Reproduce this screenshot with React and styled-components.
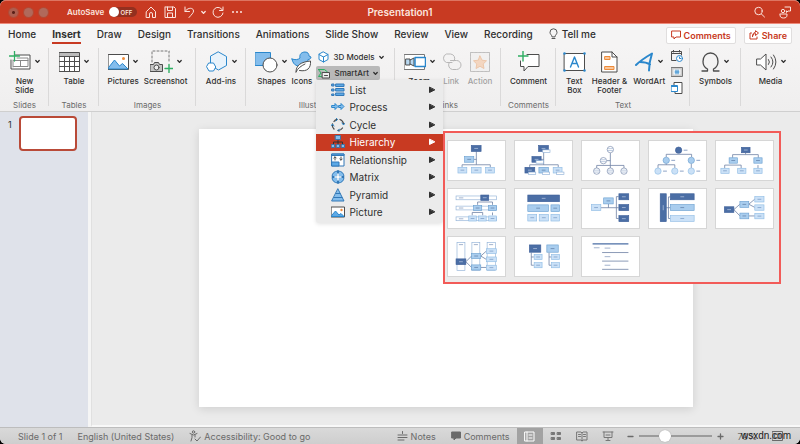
import React from "react";
import styled, { createGlobalStyle, css } from "styled-components";

const c = {
  red: "#c83a22",
  line: "#4d4d4d",
  blue: "#2a87cc",
  sky: "#84bdec",
  green: "#2fae63",
  navy: "#4b6ea5",
  mid: "#a9cdee",
  pale: "#cbe1f7",
};

const Global = createGlobalStyle`
  * { box-sizing: border-box; }
  body { margin: 0; background: #000; font-family: Inter, "Liberation Sans", sans-serif; color: #2f2f2f; }
  button { font: inherit; color: inherit; background: none; border: 0; margin: 0; padding: 0; white-space: nowrap; }
`;

const Window = styled.div`
  min-height: 100vh;
  display: flex;
  flex-direction: column;
  border-radius: 6px;
  background: #ebebeb;
`;

/* Title bar */
const TitleBar = styled.header`
  display: grid;
  grid-template-columns: 1fr auto 1fr;
  align-items: center;
  height: 24px;
  padding: 0 9px;
  color: #fbe4de;
  background: ${c.red};
  border-top: 1px solid #dd7562;
  border-bottom: 1px solid #ee8a7a;
  border-radius: 6px 6px 0 0;
`;
const BarSide = styled.div`
  display: flex;
  align-items: center;
  justify-content: ${(p) => (p.$end ? "flex-end" : "flex-start")};
  gap: ${(p) => p.$gap}px;
`;
const Title = styled.h1`
  margin: 0;
  font-size: 10px;
  font-weight: 600;
`;
const Light = styled.button`
  width: 9px;
  height: 9px;
  border-radius: 50%;
  background: ${(p) => (p.$active ? "radial-gradient(circle, #5c2018 0 1px, #ad5f50 2px)" : "#b0695b")};
  box-shadow: 0 0 0 1px #b34a35;
`;
const AutoSave = styled.label`
  display: flex;
  align-items: center;
  gap: 5px;
  margin: 0 2px 0 13px;
  font-size: 8px;
  font-weight: 600;
`;
const Switch = styled.span`
  position: relative;
  display: flex;
  align-items: center;
  justify-content: flex-end;
  width: 28px;
  height: 10px;
  padding-right: 5px;
  border-radius: 5px;
  background: #93301f;
  font-size: 6px;
  &::before {
    content: "";
    position: absolute;
    left: 0;
    width: 10px;
    height: 10px;
    border-radius: 50%;
    background: #fff;
  }
`;
const SwitchInput = styled.input`
  position: absolute;
  inset: 0;
  margin: 0;
  opacity: 0;
`;
const IconButton = styled.button`
  display: flex;
`;

const Svg = styled.svg`
  display: block;
  flex: none;
  fill: none;
  stroke: currentColor;
  stroke-width: 1;
  stroke-linecap: round;
  stroke-linejoin: round;
`;
const Icon = ({ w, h, children }) => (
  <Svg width={w} height={h} viewBox={`0 0 ${w} ${h}`} aria-hidden="true">{children}</Svg>
);
const Chevron = () => (
  <Icon w={5} h={5}><path d="M.8 1.5 2.5 3.4 4.2 1.5" strokeWidth="1.3" /></Icon>
);

/* Tabs */
const TabRow = styled.div`
  display: flex;
  align-items: center;
  height: 22px;
  padding: 0 8px;
  background: #f5f4f4;
`;
const Tabs = styled.nav`
  display: flex;
  gap: 16px;
  flex: 1;
`;
const Tab = styled.button`
  display: flex;
  align-items: center;
  gap: 4px;
  height: 18px;
  font-size: 10px;
  font-weight: ${(p) => (p.$active ? 700 : 500)};
  border-bottom: 2px solid ${(p) => (p.$active ? c.red : "transparent")};
`;
const Actions = styled.div`
  display: flex;
  gap: 8px;
`;
const ActionButton = styled.button`
  display: flex;
  align-items: center;
  gap: 3px;
  height: 17px;
  padding: 0 4px;
  font-size: 9px;
  font-weight: 600;
  color: ${c.red};
  background: #fff;
  border: 1px solid #e0dede;
  border-radius: 2px;
`;

/* Ribbon */
const Ribbon = styled.div`
  display: flex;
  height: 66px;
  padding-top: 2px;
  background: linear-gradient(#f5f4f4, #efeeee);
  border-bottom: 1px solid #cfcfcf;
`;
const Group = styled.section`
  position: relative;
  flex: ${(p) => p.$share} 1 0;
  min-width: 0;
  display: flex;
  flex-direction: column;
  align-items: center;
  justify-content: space-between;
  padding-bottom: 1px;
  &:not(:last-child)::after {
    content: "";
    position: absolute;
    right: 0;
    top: 0;
    height: 58px;
    border-right: 1px solid #dad9d9;
  }
`;
const Items = styled.div`
  display: flex;
  justify-content: center;
  gap: ${(p) => p.$gap || 6}px;
`;
const Tool = styled.button`
  display: flex;
  flex-direction: column;
  align-items: center;
  gap: 4px;
  padding-top: 2px;
  font-size: 8px;
  font-weight: 500;
  line-height: 9px;
  opacity: ${(p) => (p.disabled ? 0.42 : 1)};
  white-space: pre;
`;
const ToolIcon = styled.span`
  display: flex;
  align-items: center;
  gap: 4px;
  height: 23px;
`;
const GroupLabel = styled.div`
  font-size: 8px;
  line-height: 10px;
  color: #6b6b6b;
`;
const Stack = styled.div`
  display: flex;
  flex-direction: column;
  gap: ${(p) => p.$gap || 0}px;
  padding-top: 2px;
`;
const SmallTool = styled.button`
  display: flex;
  align-items: center;
  gap: 4px;
  height: 14px;
  padding: 0 2px;
  font-size: 8px;
  font-weight: 500;
  border-radius: 2px;
  background: ${(p) => (p.$open ? "#b9b9b9" : "transparent")};
`;
const MenuAnchor = styled.div`
  position: relative;
`;

/* Menus */
const Menu = styled.div`
  position: absolute;
  z-index: 5;
  top: 100%;
  left: 0;
  width: 127px;
  height: 143px;
  padding: 1px 0 2px;
  display: grid;
  grid-auto-rows: 1fr;
  background: #ebebeb;
  border-radius: 0 0 3px 3px;
  box-shadow: 0 1px 4px rgba(0, 0, 0, 0.12);
`;
const MenuItem = styled.button`
  display: grid;
  grid-template-columns: 14px 1fr 8px;
  align-items: center;
  gap: 4px;
  width: 100%;
  height: 100%;
  padding: 0 7px 0 15px;
  font-size: 10px;
  text-align: left;
  color: #303030;
  ${(p) => p.$active && css`color: #fff; background: ${c.red};`}
`;
const MenuCell = styled.div`
  position: relative;
`;
const Gallery = styled.div`
  position: absolute;
  left: 100%;
  top: -3px;
  display: grid;
  grid-template-columns: repeat(5, 59px);
  grid-auto-rows: 41px;
  gap: 7px 8px;
  width: 338px;
  padding: 7px 2px 5px;
  border: 2px solid #f25b58;
  background: #ebebeb;
`;
const Layout = styled.button`
  display: block;
  background: #fff;
  border: 1px solid #d6d6d6;
`;
const LayoutArt = styled.svg`
  display: block;
  width: 100%;
  height: 100%;
`;

/* Work area */
const Workspace = styled.div`
  flex: 1;
  display: flex;
`;
const Slides = styled.aside`
  flex: none;
  display: flex;
  align-items: flex-start;
  gap: 7px;
  width: 91px;
  padding: 4px 0 0 8px;
  font-size: 9px;
  line-height: 17px;
  background: #dfe2ea;
  border-right: 3px solid #f5f5f5;
`;
const Thumb = styled.button`
  width: 58px;
  height: 35px;
  background: #fff;
  border: 2px solid #b94a38;
  border-radius: 4px;
`;
const Canvas = styled.main`
  flex: 1;
  padding: 17px 107px 18px;
  border-bottom: 2px solid #f8f8f8;
  border-left: 1px solid #e0e0e0;
`;
const Slide = styled.div`
  aspect-ratio: 16 / 9;
  background: #fff;
  box-shadow: 0 2px 9px rgba(0, 0, 0, 0.12);
`;

/* Status bar */
const Status = styled.footer`
  position: relative;
  display: flex;
  align-items: center;
  justify-content: space-between;
  height: 17px;
  padding: 0 17px 0 18px;
  font-size: 9px;
  color: #6a6a6a;
  background: linear-gradient(#d9d9d9, #cecece);
  border-top: 1px solid #bdbdbd;
  border-radius: 0 0 6px 6px;
`;
const StatusSide = styled.div`
  display: flex;
  align-items: center;
  gap: ${(p) => p.$gap}px;
`;
const StatusButton = styled.button`
  display: flex;
  align-items: center;
  gap: 3px;
`;
const Views = styled.div`
  display: flex;
  margin-left: 7px;
`;
const ViewButton = styled.button`
  display: flex;
  align-items: center;
  justify-content: center;
  width: 26px;
  height: 16px;
  color: ${(p) => (p.$active ? "#fff" : "#777")};
  background: ${(p) => (p.$active ? "#a2a2a2" : "none")};
`;
const Zoom = styled.div`
  display: flex;
  align-items: center;
  gap: 5px;
  margin: 0 14px 0 6px;
`;
const Slider = styled.input`
  appearance: none;
  width: 73px;
  height: 12px;
  margin: 0;
  background: linear-gradient(#9b9b9b, #9b9b9b) center / 100% 2px no-repeat;
  &::-webkit-slider-thumb {
    appearance: none;
    width: 12px;
    height: 12px;
    border-radius: 50%;
    background: #fff;
    box-shadow: 0 0 1px #888;
  }
`;
const Fit = styled.button`
  display: flex;
  margin-left: 15px;
`;
const Watermark = styled.span`
  position: absolute;
  right: 9px;
  top: 2px;
  font: 10px/12px "Liberation Sans", sans-serif;
  color: #1c1c1c;
`;

/* Ribbon icons */
const NewSlideIcon = () => (
  <Icon w={22} h={22}>
    <path d="M6 4h15v14H2V9" stroke={c.line} fill="#fff" />
    <path d="M4 16V9M8 7h11v8.500H4.500M4.500 9.500H19M11.500 9.500v6" stroke="#888" />
    <path d="M5.500 0v10M.500 5h10" stroke={c.green} strokeWidth="1.3" />
  </Icon>
);
const TableIcon = () => (
  <Icon w={21} h={22}>
    <rect x=".5" y="1.5" width="20" height="19" fill="#fff" stroke={c.line} />
    <rect x="1" y="2" width="19" height="3" fill="#bbb" stroke="none" />
    <path d="M.500 5.500h20M.500 10.500h20M.500 15.500h20M5.500 5.500v15M10.500 5.500v15M15.500 5.500v15" stroke={c.line} />
  </Icon>
);
const PicturesIcon = () => (
  <Icon w={21} h={22}>
    <rect x=".5" y="3.500" width="20" height="15" fill="#fff" stroke={c.line} />
    <path d="M1 16 6.500 9l5 6 3-2.500L20 18H1z" fill={c.sky} stroke={c.blue} />
    <circle cx="15.500" cy="7.500" r="1.500" fill="#ee8b3a" stroke="none" />
  </Icon>
);
const ScreenshotIcon = () => (
  <Icon w={23} h={23}>
    <path d="M2 12V1h17v12" stroke="#777" strokeDasharray="2 2" fill="none" />
    <path d="M.500 14.500h3l1-2h4l1 2h3v7H.500z" fill="#c4c4c4" stroke={c.line} />
    <circle cx="6.500" cy="17.500" r="2.500" fill="#eee" stroke={c.line} />
    <path d="M19 14.500v8M15 18.500h8" stroke={c.green} strokeWidth="1.4" />
  </Icon>
);
const AddinsIcon = () => (
  <Icon w={22} h={22}>
    <path d="m12.500 1 8 4.500v9l-8 4.500-8-4.500v-9z" fill="#e9f3fb" stroke={c.blue} />
    <path d="M3 12h4.500l2.300 4-2.300 4H3L.700 16z" fill="#fff" stroke={c.blue} />
  </Icon>
);
const ShapesIcon = () => (
  <Icon w={23} h={22}>
    <rect x=".5" y="1.5" width="15" height="13" fill={c.sky} stroke={c.blue} />
    <circle cx="15" cy="14" r="7" fill="#fff" stroke={c.line} />
  </Icon>
);
const IconsIcon = () => (
  <Icon w={21} h={22}>
    <path d="M1 8c3 1 6 1 8-1-1-4 2-6 5-6s4 2 4 4l2 1c0 2-2 2.500-3 2.500 0 2-1 4-3 6-5 2-12 1-13-6.500z" fill={c.sky} stroke={c.blue} />
    <path d="M5 21c0-7 5-10 14.500-11 .5 7-3 11-11 9.500M5 21c2-4 5-6 9-8" fill="#fff" stroke={c.line} />
  </Icon>
);
const CubeIcon = () => (
  <Icon w={11} h={12}>
    <path d="m5.500 1 4.500 2.500v5L5.500 11 1 8.500v-5z" fill="#fff" stroke={c.blue} />
    <path d="m1 3.500 4.500 2.500L10 3.500M5.500 6v5" stroke={c.blue} />
  </Icon>
);
const SmartArtIcon = () => (
  <Icon w={12} h={11}>
    <path d="M.500 1.500h6l3 2.500M.500 1.500 3 5 .500 8.500h3" stroke={c.green} fill="#9ed3b1" />
    <rect x="4.500" y="4.500" width="7" height="5.500" fill="#eee" stroke={c.line} />
    <path d="M6.500 7.500h3" stroke={c.line} />
  </Icon>
);
const ZoomIcon = () => (
  <Icon w={22} h={22}>
    <rect x=".5" y="3.500" width="20" height="15" fill="#fff" stroke="#777" />
    <path d="M2 8h4v6H2zM6 9l4-2v8l-4-2" fill="#b8d8f0" stroke={c.line} />
    <rect x="11" y="6.500" width="10.500" height="9" fill="#fff" stroke={c.blue} strokeWidth="1.500" />
  </Icon>
);
const LinkIcon = () => (
  <Icon w={21} h={22}>
    <path d="M11 11.500H5.500a4.500 4.500 0 0 1 0-8.500h4a4.500 4.500 0 0 1 3.500 7M9.500 9.500h6a4.500 4.500 0 0 1 0 9h-4A4.500 4.500 0 0 1 8 12" stroke="#666" />
  </Icon>
);
const ActionIcon = () => (
  <Icon w={20} h={22}>
    <rect x=".5" y="1.500" width="19" height="19" fill="#eee" stroke="#777" strokeDasharray="3 1" />
    <path d="m10 5 2 4.200 4.500.600-3.300 3.200.800 4.500-4-2.200-4 2.200.800-4.500-3.300-3.200L8 9.200z" fill="#f4b07c" stroke="#e58b45" />
  </Icon>
);
const CommentIcon = () => (
  <Icon w={22} h={22}>
    <path d="M9 3.500h12v12H10l-4 4.500v-4.500H2.500V10" fill="#fff" stroke={c.line} />
    <path d="M5 0v10M0 5h10" stroke={c.green} strokeWidth="1.400" />
  </Icon>
);
const TextBoxIcon = () => (
  <Icon w={23} h={22}>
    <rect x="1.500" y="2.500" width="20" height="17" fill="#fff" stroke={c.line} />
    <path d="m7.500 16 4-10 4 10M9 12.500h5" stroke={c.blue} strokeWidth="1.400" />
    <path d="M1.500 2.500h.010M21.500 2.500h.010M1.500 19.500h.010M21.500 19.500h.010" stroke={c.blue} strokeWidth="2.600" />
  </Icon>
);
const HeaderIcon = () => (
  <Icon w={17} h={22}>
    <path d="M1 1h10l5 5v15H1z" fill="#fff" stroke={c.line} />
    <path d="M11 1v5h5" stroke={c.line} />
    <path d="M4 5.500h5v3H4zM4 15.500h9v3H4z" fill="#f8c79c" stroke="#ee8b3a" />
  </Icon>
);
const WordArtIcon = () => (
  <Icon w={19} h={22}>
    <path d="M1 14C5 10 11 6 17 2.500c-2 6-3 12-3 17M5 11c4 0 7 .500 10 2.500" stroke={c.blue} strokeWidth="2" />
  </Icon>
);
const DateIcon = () => (
  <Icon w={12} h={12}>
    <path d="M5 10.500H.500v-9h10V5M.500 3.500h10M2.500 0v2M8.500 0v2" stroke={c.line} />
    <circle cx="8.500" cy="8.500" r="3" fill="#fff" stroke={c.blue} />
    <path d="M8.500 7v1.500H10" stroke={c.blue} />
  </Icon>
);
const NumberIcon = () => (
  <Icon w={12} h={12}>
    <rect x=".5" y="1.500" width="11" height="9" fill="#ccc" stroke="#777" />
    <rect x="2.500" y="3.500" width="7" height="5" fill="#fff" stroke="none" />
    <path d="M5 4v4M7 4v4M4 5.200h4M4 6.800h4" stroke={c.blue} strokeWidth=".8" />
  </Icon>
);
const ObjectIcon = () => (
  <Icon w={12} h={12}>
    <path d="M3 3V.500h8v11H4V9" fill="#fff" stroke={c.line} />
    <path d="M.500 3.500h6v6h-6zM.500 4.500h6" fill="#fff" stroke={c.blue} />
  </Icon>
);
const OmegaIcon = () => (
  <Icon w={19} h={22}>
    <path d="M1 20h5.500v-2C3.500 16.500 2 14 2 10.500 2 5.500 5 2 9.500 2S17 5.500 17 10.500c0 3.500-1.500 6-4.500 7.500v2H18" stroke={c.line} strokeWidth="1.300" />
  </Icon>
);
const MediaIcon = () => (
  <Icon w={21} h={22}>
    <path d="M1 8h3.500L10 3v16l-5.500-5H1z" fill="#fff" stroke={c.line} />
    <path d="M12.500 8.500q2 2.500 0 5M15 6q4 5 0 10M17.500 4q5 7 0 14" stroke={c.line} />
  </Icon>
);

/* SmartArt category icons */
const categoryArt = {
  List: <><path d="M1 1h2v2H1zM1 6h2v2H1zM1 11h2v1.500H1zM5 1h8v2.500H5zM5 5.500h8V8H5zM5 10h8v2.500H5z" fill="#5da9e6" stroke="#3279b8" /></>,
  Process: <path d="M1 5.500h3v-2L7 6.500l-3 3v-2H1zM8 5.500h2v-2l3 3-3 3v-2H8z" fill={c.sky} stroke={c.blue} />,
  Cycle: <><path d="M9 1.500A5.500 5.500 0 0 1 12.500 6M11.500 10A5.500 5.500 0 0 1 7 12.500M3 11a5.500 5.500 0 0 1-1.500-5M3 3.500A5 5 0 0 1 6 1.500" stroke={c.line} strokeWidth="1.300" /><path d="m11 5 1.500 2L14 5M8.500 11 7 12.500 8.500 14M0 8l1.500-2L3 8M5 0l1.500 1.500L5 3" stroke={c.blue} /></>,
  Hierarchy: <><path d="M7 4v3M2.500 9V7h9v2M7 7v3" stroke="#333" /><path d="M4.500.500h5v4h-5zM.500 9.500h3v3h-3zM5.500 9.500h3v3h-3zM10.500 9.500h3v3h-3z" fill={c.sky} stroke="#3c74a7" /></>,
  Relationship: <><rect x="1" y="1" width="12" height="12" fill="#fff" stroke="#3279b8" /><path d="M1 9h7v4H1zM1 1h12v1.500H1z" fill="#5da9e6" stroke="#3279b8" /><path d="M4 7V4M2.800 5 4 3.800 5.200 5M10 4v3M8.800 6 10 7.200 11.200 6" stroke={c.line} /></>,
  Matrix: <><path d="M6.500 1v5.500H1A6 6 0 0 1 6.500 1zM7.500 1v5.500H13A6 6 0 0 0 7.500 1zM6.500 13V7.500H1A6 6 0 0 0 6.500 13zM7.500 13V7.500H13A6 6 0 0 1 7.500 13z" fill={c.sky} stroke="#3279b8" /><path d="M7 4v6M4 7h6" stroke="#fff" strokeWidth="1.600" /></>,
  Pyramid: <><path d="m7 1 6 12H1z" fill={c.sky} stroke="#3279b8" /><path d="M5 5.500h4M3 9.500h8" stroke="#3279b8" /></>,
  Picture: <><rect x=".5" y="2" width="13" height="10" fill="#fff" stroke={c.line} /><path d="m1 10 3.500-4L8 10l2-1.500 3 3H1z" fill="#5da9e6" stroke={c.blue} /><circle cx="10.500" cy="5" r="1.200" fill="#ee8b3a" stroke="none" /></>,
};

/* Hierarchy layouts, drawn on a 177 x 123 grid */
const tones = {
  dark: [c.navy, "#3d5f99", "#c5d3ea"],
  mid: [c.mid, "#6ba0d0", "#55749f"],
  light: [c.pale, "#8fbce4", "#6b8fbd"],
  blank: ["#fff", "#8fb0d6", "#fff"],
};
const Box = ({ b: [x, y, w, h, tone] }) => {
  const [fill, edge, mark] = tones[tone];
  return (
    <g>
      <rect x={x} y={y} width={w} height={h} fill={fill} stroke={edge} strokeWidth="2" />
      <path d={h > w * 2 ? `M${x + w / 2} ${y + h / 2 - 8}v16` : `M${x + w / 2 - 6} ${y + h / 2}h12`} stroke={mark} strokeWidth="2" />
    </g>
  );
};
const Node = ({ n: [x, y, tone, side] }) => {
  const [fill, edge] = tones[tone];
  return (
    <g>
      {side ? (
        <>
          <circle cx={x} cy={y} r="10" fill={fill} stroke={edge} strokeWidth="2" />
          <path d={`M${x + 16} ${y}h12`} stroke={c.navy} strokeWidth="2" />
        </>
      ) : (
        <>
          <circle cx={x} cy={y} r="10" fill="#fff" stroke="#6d80a4" strokeWidth="2" />
          <path d={`M${x - 8} ${y - 3}h16M${x - 8} ${y + 3}h16`} stroke="#9ab0d0" strokeWidth="2" />
        </>
      )}
    </g>
  );
};

const layouts = [
  { name: "Organization Chart", lines: "M88 33V75M80 58H88M43 83V75H132V83", boxes: [[72, 14, 31, 19, "dark"], [51, 49, 29, 18, "mid"], [30, 83, 28, 18, "light"], [73, 83, 30, 18, "light"], [117, 83, 28, 18, "light"]] },
  { name: "Name and Title Organization Chart", lines: "M89 33V75M80 58H89M45 83V75H135V83", boxes: [[73, 14, 31, 19, "dark"], [86, 28, 23, 8, "blank"], [52, 49, 29, 18, "dark"], [65, 62, 23, 8, "blank"], [30, 83, 31, 18, "dark"], [41, 98, 23, 8, "blank"], [74, 83, 30, 18, "mid"], [85, 98, 23, 8, "blank"], [119, 83, 28, 18, "light"], [130, 98, 23, 8, "blank"]] },
  { name: "Half Circle Organization Chart", lines: "M88 38V77M77 62H88M45 85V77H131V85M88 77V85", nodes: [[88, 27, "blank"], [66, 62, "blank"], [45, 95, "blank"], [88, 95, "blank"], [131, 95, "blank"]] },
  { name: "Circle Picture Hierarchy", lines: "M53 51V42H133V51M27 85V75H80V85M53 71V75M132 71V85", nodes: [[92, 29, "dark", true], [53, 61, "mid", true], [132, 61, "mid", true], [27, 95, "light", true], [80, 95, "light", true], [132, 95, "light", true]] },
  { name: "Hierarchy", lines: "M92 37V42M51 53V43H132V53M26 86V76H78V86M131 76V86", boxes: [[79, 20, 27, 17, "dark"], [40, 53, 26, 17, "mid"], [118, 53, 26, 17, "mid"], [14, 86, 26, 16, "light"], [67, 86, 26, 16, "light"], [118, 86, 26, 16, "light"]] },
  { name: "Labeled Hierarchy", lines: "M92 50V41H139V50M75 83V74H108V83M139 74V83", boxes: [[24, 22, 127, 12, "blank"], [24, 54, 127, 12, "blank"], [24, 88, 127, 12, "blank"], [102, 19, 25, 17, "dark"], [79, 52, 26, 16, "mid"], [126, 52, 26, 16, "mid"], [64, 85, 24, 16, "light"], [95, 85, 24, 16, "light"], [127, 85, 24, 16, "light"]], marks: "M33 28h14M33 60h14M33 94h14" },
  { name: "Table Hierarchy", boxes: [[39, 19, 100, 21, "dark"], [39, 50, 65, 21, "mid"], [112, 50, 27, 21, "mid"], [39, 80, 28, 21, "light"], [75, 80, 29, 21, "light"], [112, 80, 27, 21, "light"]] },
  { name: "Horizontal Organization Chart", lines: "M58 59H107M82 47V59M114 24H107V93H114M107 59H114", boxes: [[67, 28, 30, 19, "mid"], [28, 49, 30, 19, "light"], [115, 15, 31, 19, "dark"], [115, 49, 31, 19, "dark"], [115, 84, 31, 19, "dark"]] },
  { name: "Horizontal Multi-Level Hierarchy", lines: "M66 25H60V93H66M53 59H66", boxes: [[34, 15, 19, 88, "dark"], [66, 15, 75, 19, "dark"], [66, 49, 75, 19, "mid"], [66, 84, 75, 18, "light"]] },
  { name: "Horizontal Hierarchy", lines: "M55 65 74 48M55 65 74 85M102 48 121 32M102 48 121 58M102 85H121", boxes: [[25, 56, 30, 18, "dark"], [74, 39, 28, 19, "mid"], [74, 76, 28, 18, "mid"], [121, 24, 29, 17, "light"], [121, 50, 29, 17, "light"], [121, 77, 29, 17, "light"]] },
  { name: "Horizontal Labeled Hierarchy", lines: "M55 78 73 60M55 78 73 96M102 60 120 44M102 60 120 71M102 96H120", columns: [[27, 17, 25, 89], [74, 17, 25, 89], [122, 17, 26, 89]], marks: "M33 24h13M80 24h13M128 24h13", boxes: [[24, 69, 31, 18, "dark"], [73, 52, 29, 16, "mid"], [73, 88, 29, 16, "mid"], [120, 37, 31, 15, "light"], [120, 63, 31, 15, "light"], [120, 89, 31, 15, "light"]] },
  { name: "Hierarchy List", lines: "M50 49V89H58M50 63H58M106 49V89H114M106 63H114", boxes: [[44, 25, 36, 23, "dark"], [99, 25, 36, 23, "mid"], [59, 55, 25, 16, "light"], [59, 81, 25, 16, "light"], [114, 55, 25, 16, "light"], [114, 81, 25, 16, "light"]] },
  { name: "Lined List", lines: "M62 49H145M62 76H145M62 102H145", heavy: "M32 22H145", marks: "M36 34h18M70 35h18M70 62h18M70 89h18" },
];
const LayoutThumb = ({ layout }) => (
  <Layout aria-label={layout.name}>
    <LayoutArt viewBox="0 0 177 123" fill="none" aria-hidden="true">
      {(layout.columns || []).map(([x, y, w, h]) => (
        <rect key={x} x={x} y={y} width={w} height={h} stroke="#8fb0d6" strokeWidth="2" />
      ))}
      {layout.lines && <path d={layout.lines} stroke="#6d80a4" strokeWidth="2.500" />}
      {layout.heavy && <path d={layout.heavy} stroke={c.navy} strokeWidth="4" />}
      {(layout.boxes || []).map((b, i) => <Box key={i} b={b} />)}
      {(layout.nodes || []).map((n, i) => <Node key={i} n={n} />)}
      {layout.marks && <path d={layout.marks} stroke="#6d86b0" strokeWidth="2" />}
    </LayoutArt>
  </Layout>
);

const RibbonTool = ({ icon, label, menu, disabled }) => (
  <Tool disabled={disabled}>
    <ToolIcon>{icon}{menu && <Chevron />}</ToolIcon>
    <span>{label}</span>
  </Tool>
);
const RibbonGroup = ({ share, label, gap, children }) => (
  <Group $share={share}>
    <Items $gap={gap}>{children}</Items>
    <GroupLabel>{label}</GroupLabel>
  </Group>
);

const tabs = ["Home", "Insert", "Draw", "Design", "Transitions", "Animations", "Slide Show", "Review", "View", "Recording"];

const SmartArtMenu = () => (
  <Menu role="menu">
    {Object.keys(categoryArt).map((name) => (
      <MenuCell key={name}>
        <MenuItem role="menuitem" $active={name === "Hierarchy"}>
          <Icon w={14} h={14}>{categoryArt[name]}</Icon>
          <span>{name}</span>
          <Icon w={8} h={8}><path d="M1.500 1.500v5l5-2.500z" fill="currentColor" /></Icon>
        </MenuItem>
        {name === "Hierarchy" && (
          <Gallery>{layouts.map((l) => <LayoutThumb key={l.name} layout={l} />)}</Gallery>
        )}
      </MenuCell>
    ))}
  </Menu>
);

export default function App() {
  return (
    <>
      <Global />
      <Window>
        <TitleBar>
          <BarSide $gap={6}>
            <Light $active aria-label="Close" />
            <Light aria-label="Minimize" />
            <Light aria-label="Full screen" />
            <AutoSave>
              AutoSave
              <Switch><SwitchInput type="checkbox" role="switch" />OFF</Switch>
            </AutoSave>
            <IconButton aria-label="Home"><Icon w={12} h={12}><path d="M1.500 5.500 6 1l4.500 4.500v6H7.500V8a1.500 1.500 0 0 0-3 0v3.500h-3z" /></Icon></IconButton>
            <IconButton aria-label="Save"><Icon w={14} h={12}><path d="M3 1h8l1.500 1.500v9H2V1zM4.500 1v3.500h5V1M4.500 11V7h5v4" /></Icon></IconButton>
            <IconButton aria-label="Undo"><Icon w={12} h={12}><path d="M2 1v4.500h4.500M2 5.500C5 1 10.500 1.500 10.500 5c0 2-2 3.500-4.500 6.500" /></Icon></IconButton>
            <IconButton aria-label="Undo history"><Chevron /></IconButton>
            <IconButton aria-label="Redo"><Icon w={12} h={12}><path d="M11 1v3.500H7.500M10.700 4.500A5 5 0 1 0 11 7" /></Icon></IconButton>
            <IconButton aria-label="More"><Icon w={14} h={4}><path d="M3 2h.010M7 2h.010M11 2h.010" strokeWidth="2" /></Icon></IconButton>
          </BarSide>
          <Title>Presentation1</Title>
          <BarSide $end $gap={14}>
            <IconButton aria-label="Search"><Icon w={11} h={12}><circle cx="4.500" cy="5" r="3.700" /><path d="m7.200 7.800 3.300 3.200" /></Icon></IconButton>
            <IconButton aria-label="Collaborate"><Icon w={12} h={13}><path d="M6 1h5.500v4H9L7.500 6.500V5M1 8h7v1c0 2-1 3-3.500 3S1 11 1 9z" /><circle cx="4" cy="5" r="1.700" /></Icon></IconButton>
          </BarSide>
        </TitleBar>

        <TabRow>
          <Tabs>
            {tabs.map((t) => <Tab key={t} $active={t === "Insert"}>{t}</Tab>)}
            <Tab>
              <Icon w={9} h={12}><path d="M3 8.500C3 7 1 6.500 1 4.300a3.500 3.500 0 0 1 7 0C8 6.500 6 7 6 8.500zM3 10.500h3" stroke="#555" /></Icon>
              Tell me
            </Tab>
          </Tabs>
          <Actions>
            <ActionButton><Icon w={10} h={10}><path d="M1 1h8.500v6H5L3 9V7H1z" /></Icon>Comments</ActionButton>
            <ActionButton><Icon w={10} h={10}><path d="M2.500 3H1v6h7V7M3.500 6.500C4 4 5.500 3.500 6.500 3.500V5.500L9.500 3 6.500.700v1.500C4.500 2.500 3.500 4 3.500 6.500z" /></Icon>Share</ActionButton>
          </Actions>
        </TabRow>

        <Ribbon>
          <RibbonGroup share={49} label="Slides"><RibbonTool icon={<NewSlideIcon />} label={"New\nSlide"} menu /></RibbonGroup>
          <RibbonGroup share={50} label="Tables"><RibbonTool icon={<TableIcon />} label="Table" menu /></RibbonGroup>
          <RibbonGroup share={97} label="Images" gap={5}>
            <RibbonTool icon={<PicturesIcon />} label="Pictures" menu />
            <RibbonTool icon={<ScreenshotIcon />} label="Screenshot" menu />
          </RibbonGroup>
          <RibbonGroup share={50} label=""><RibbonTool icon={<AddinsIcon />} label="Add-ins" menu /></RibbonGroup>
          <RibbonGroup share={149} label="Illustrations" gap={4}>
            <RibbonTool icon={<ShapesIcon />} label="Shapes" menu />
            <RibbonTool icon={<IconsIcon />} label="Icons" />
            <Stack $gap={2}>
              <SmallTool><CubeIcon />3D Models<Chevron /></SmallTool>
              <MenuAnchor>
                <SmallTool $open aria-expanded="true"><SmartArtIcon />SmartArt<Chevron /></SmallTool>
                <SmartArtMenu />
              </MenuAnchor>
            </Stack>
          </RibbonGroup>
          <RibbonGroup share={106} label="Links">
            <RibbonTool icon={<ZoomIcon />} label="Zoom" menu />
            <RibbonTool icon={<LinkIcon />} label="Link" disabled />
            <RibbonTool icon={<ActionIcon />} label="Action" disabled />
          </RibbonGroup>
          <RibbonGroup share={55} label="Comments"><RibbonTool icon={<CommentIcon />} label="Comment" /></RibbonGroup>
          <RibbonGroup share={134} label="Text">
            <RibbonTool icon={<TextBoxIcon />} label={"Text\nBox"} />
            <RibbonTool icon={<HeaderIcon />} label={"Header &\nFooter"} />
            <RibbonTool icon={<WordArtIcon />} label="WordArt" menu />
            <Stack $gap={4}><DateIcon /><NumberIcon /><ObjectIcon /></Stack>
          </RibbonGroup>
          <RibbonGroup share={51} label=""><RibbonTool icon={<OmegaIcon />} label="Symbols" menu /></RibbonGroup>
          <RibbonGroup share={59} label=""><RibbonTool icon={<MediaIcon />} label="Media" menu /></RibbonGroup>
        </Ribbon>

        <Workspace>
          <Slides><span>1</span><Thumb aria-label="Slide 1" /></Slides>
          <Canvas><Slide /></Canvas>
        </Workspace>

        <Status>
          <StatusSide $gap={15}>
            <span>Slide 1 of 1</span>
            <StatusButton>English (United States)</StatusButton>
            <StatusButton>
              <Icon w={12} h={12}><circle cx="4.500" cy="2" r="1.200" /><path d="M1 3.500 4.500 5 8 3.500M3 5v2.500L2 11M6 5v2M6 9l2 2 3.500-4" /></Icon>
              Accessibility: Good to go
            </StatusButton>
          </StatusSide>
          <StatusSide $gap={0}>
            <StatusSide $gap={15}>
              <StatusButton><Icon w={11} h={10}><path d="M1 4h9M1 6.500h9M1 9h6M5.500.500v2" /></Icon>Notes</StatusButton>
              <StatusButton><Icon w={10} h={10}><path d="M1 1h8.500v6H5L3 9V7H1z" fill="currentColor" /></Icon>Comments</StatusButton>
            </StatusSide>
            <Views>
              <ViewButton $active aria-label="Normal view"><Icon w={11} h={11}><path d="M1 1h9v9H1zM3 1v9M5 4h3M5 7h3" /></Icon></ViewButton>
              <ViewButton aria-label="Slide sorter"><Icon w={12} h={10}><path d="M1.500 1.500h3v2h-3zM7.500 1.500h3v2h-3zM1.500 6.500h3v2h-3zM7.500 6.500h3v2h-3z" fill="currentColor" /></Icon></ViewButton>
              <ViewButton aria-label="Reading view"><Icon w={12} h={11}><path d="M1 1h4l1 1 1-1h4v8H7l-1 1-1-1H1zM6 2v8M2.500 3.500h2M2.500 5.500h2M7.500 3.500h2M7.500 5.500h2" /></Icon></ViewButton>
              <ViewButton aria-label="Slide show"><Icon w={12} h={11}><path d="M1 1h10M2 1v5.500h8V1M6 6.500v3M4 9.500h4M4 4h4" /></Icon></ViewButton>
            </Views>
            <Zoom>
              <IconButton aria-label="Zoom out"><Icon w={7} h={7}><path d="M1 3.500h5" strokeWidth="1.300" /></Icon></IconButton>
              <Slider type="range" aria-label="Zoom" min="0" max="100" defaultValue="33" />
              <IconButton aria-label="Zoom in"><Icon w={7} h={7}><path d="M1 3.500h5M3.500 1v5" strokeWidth="1.300" /></Icon></IconButton>
            </Zoom>
            <StatusButton>79%</StatusButton>
            <Fit aria-label="Fit slide to window"><Icon w={11} h={10}><path d="M.500.500h10v9H.500zM3 3h5v4H3z" /></Icon></Fit>
          </StatusSide>
          <Watermark>wsxdn.com</Watermark>
        </Status>
      </Window>
    </>
  );
}
